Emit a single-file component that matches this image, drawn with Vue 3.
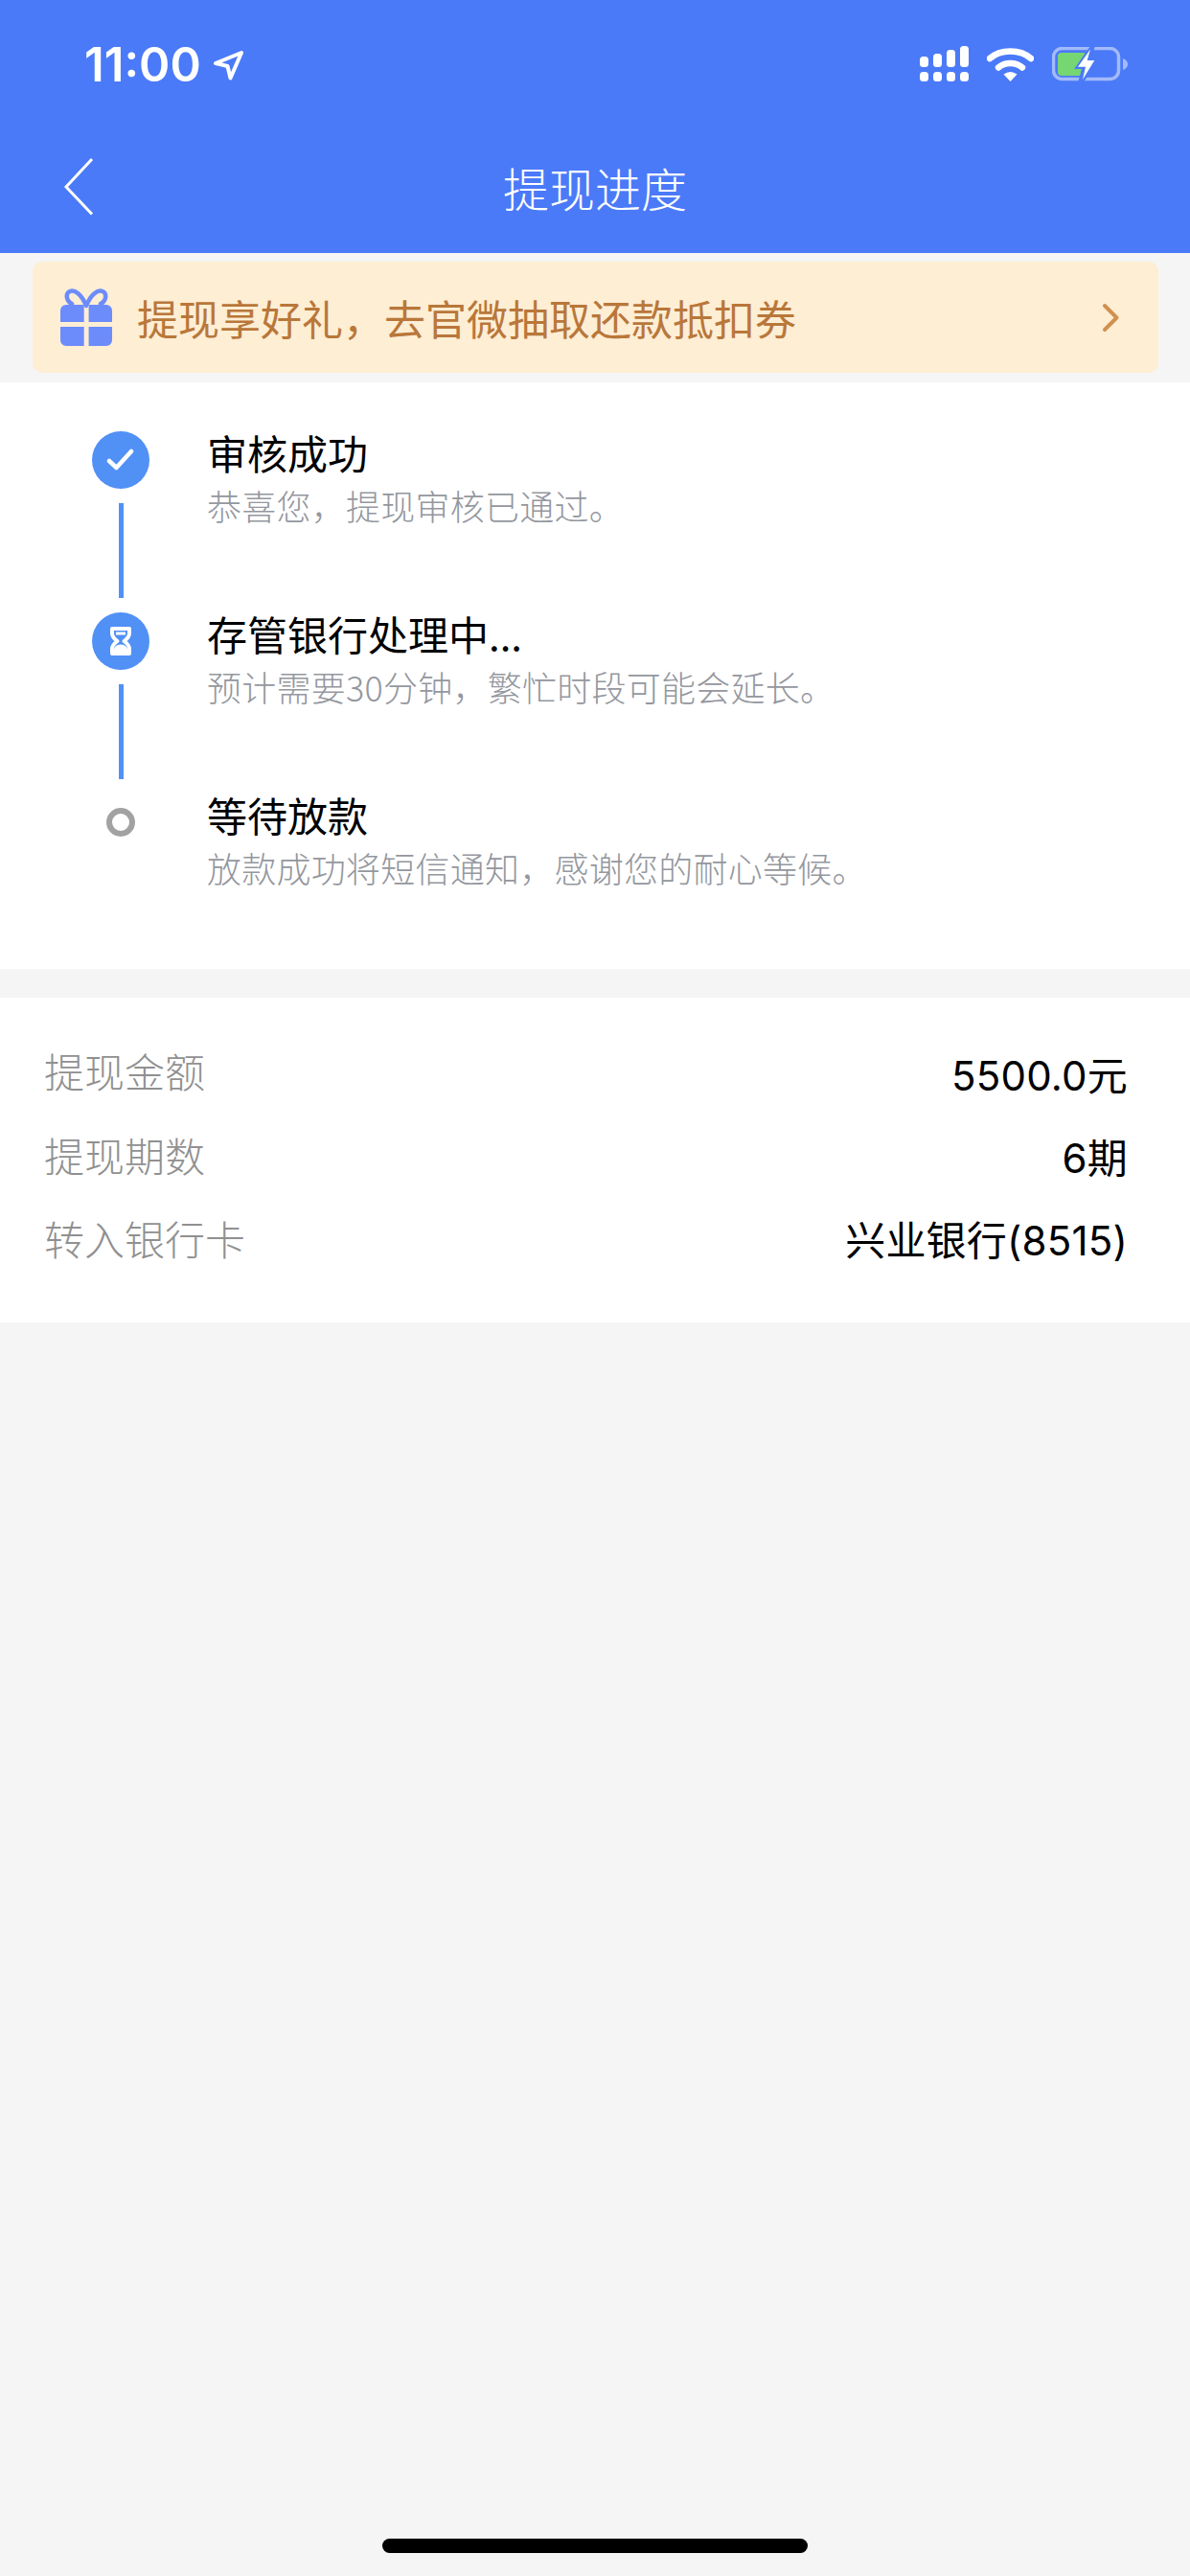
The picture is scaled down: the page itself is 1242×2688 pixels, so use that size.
<script setup>
const steps = [
  { title: '审核成功', desc: '恭喜您\uFF0C提现审核已通过。', kind: 'done' },
  { title: '存管银行处理中...', desc: '预计需要30分钟\uFF0C繁忙时段可能会延长。', kind: 'wait' },
  { title: '等待放款', desc: '放款成功将短信通知\uFF0C感谢您的耐心等候。', kind: 'todo' }
]
const labels = ['提现金额', '提现期数', '转入银行卡']
const values = ['5500.0元', '6期', '兴业银行(8515)']
</script>

<template>
  <div class="page">
    <header class="head">
      <div class="status">
        <div class="time">
          <span>11:00</span>
          <svg class="loc" width="33" height="32" viewBox="0 0 33 32"><path d="M3 14 L30 3 L18.5 29.5 L15.5 17 Z" fill="none" stroke="#fff" stroke-width="4" stroke-linejoin="round"/></svg>
        </div>
        <div class="sys">
          <svg class="signal" width="51" height="37" viewBox="0 0 51 37" fill="#fff">
            <rect x="0" y="11" width="9" height="11" rx="3.5"/><rect x="14" y="8" width="9" height="14" rx="3.5"/><rect x="28" y="4" width="9" height="18" rx="3.5"/><rect x="42" y="0" width="9" height="22" rx="3.5"/>
            <rect x="0" y="27" width="9" height="10" rx="3.5"/><rect x="14" y="27" width="9" height="10" rx="3.5"/><rect x="28" y="27" width="9" height="10" rx="3.5"/><rect x="42" y="27" width="9" height="10" rx="3.5"/>
          </svg>
          <svg class="wifi" width="49" height="35" viewBox="0 0 49 35">
            <path d="M3 11 C14 1 35 1 46 11" fill="none" stroke="#fff" stroke-width="6.5" stroke-linecap="round"/>
            <path d="M12 20.5 C19 14.5 30 14.5 37 20.5" fill="none" stroke="#fff" stroke-width="6.5" stroke-linecap="round"/>
            <path d="M17.5 27.5 Q24.5 22.5 31.5 27.5 L24.5 35 Z" fill="#fff"/>
          </svg>
          <svg class="batt" width="79" height="37" viewBox="0 0 79 37">
            <rect x="1.5" y="1.5" width="68" height="32" rx="9" fill="none" stroke="#a3bafb" stroke-width="3.5"/>
            <path d="M74 12 Q79 14 79 18 Q79 22 74 24 Z" fill="#a3bafb"/>
            <rect x="6" y="6" width="30" height="24" rx="4" fill="#76d672"/>
            <path d="M40 -1 L23 23 H31 L27 37 H33 L49 12 H41 L45 -1 Z" fill="#4a7af8"/>
            <path d="M40 2.5 L27 20.7 H35 L32 34 L44.3 14 H36.7 Z" fill="#fff"/>
          </svg>
        </div>
      </div>
      <div class="nav">
        <svg class="back" width="34" height="62" viewBox="0 0 34 62"><path d="M30 2 L3 31 L30 59.5" fill="none" stroke="#fff" stroke-width="3"/></svg>
        <span class="nav-title">提现进度</span>
      </div>
    </header>

    <div class="notice-wrap">
      <div class="notice">
        <svg class="gift" width="54" height="60" viewBox="0 0 54 60">
          <path d="M27 18 C22 6 15 1 10 3 C5 5 6 13 12 16 M27 18 C32 6 39 1 44 3 C49 5 48 13 42 16" fill="none" stroke="#6d8cfb" stroke-width="4.5" stroke-linecap="round"/>
          <path d="M6 17 H24.7 V35 H0 V23 a6 6 0 0 1 6-6 Z M29.6 17 H48 a6 6 0 0 1 6 6 V35 H29.6 Z M0 40 H24.7 V60 H6 a6 6 0 0 1-6-6 Z M29.6 40 H54 V54 a6 6 0 0 1-6 6 H29.6 Z" fill="#6d8cfb"/>
        </svg>
        <span class="notice-text">提现享好礼&#xFF0C;去官微抽取还款抵扣券</span>
        <svg class="chev" width="19" height="31" viewBox="0 0 19 31"><path d="M3 3 L15.5 15.5 L3 28" fill="none" stroke="#d0914f" stroke-width="4" stroke-linecap="round" stroke-linejoin="round"/></svg>
      </div>
    </div>

    <section class="steps">
      <div v-for="(s, i) in steps" :key="s.title" class="step">
        <div class="rail">
          <div class="dot" :class="s.kind">
            <svg v-if="s.kind === 'done'" width="30" height="24" viewBox="0 0 30 24"><path d="M3 13 L10.5 20 L26 3" fill="none" stroke="#fff" stroke-width="4.5" stroke-linecap="round" stroke-linejoin="round"/></svg>
            <svg v-else-if="s.kind === 'wait'" width="24" height="30" viewBox="0 0 24 30">
              <path d="M3 2 H21 V7 Q21 11 15.5 15 Q21 19 21 23 V28 H3 V23 Q3 19 8.5 15 Q3 11 3 7 Z" fill="none" stroke="#fff" stroke-width="4" stroke-linejoin="round"/>
              <path d="M7 7 H17" stroke="#fff" stroke-width="3"/>
              <path d="M5 27 V24 Q5 19 12 18.5 Q19 19 19 24 V27 Z" fill="#fff"/>
            </svg>
          </div>
          <div v-if="i < steps.length - 1" class="line"></div>
        </div>
        <div class="copy">
          <div class="title">{{ s.title }}</div>
          <div class="desc">{{ s.desc }}</div>
        </div>
      </div>
    </section>

    <section class="info">
      <div class="col labels">
        <div v-for="l in labels" :key="l" class="label">{{ l }}</div>
      </div>
      <div class="col values">
        <div v-for="v in values" :key="v" class="value">{{ v }}</div>
      </div>
    </section>

    <div class="home"></div>
  </div>
</template>

<style>
html, body { margin: 0; background: #f5f5f5; }
</style>

<style scoped>
.page {
  width: 1242px;
  height: 2688px;
  background: #f5f5f5;
  position: relative;
  overflow: hidden;
  font-family: "Noto Sans CJK SC", "Liberation Sans", sans-serif;
}
.head { height: 264px; background: #4a7af8; color: #fff; }
.status {
  height: 130px;
  display: flex;
  justify-content: space-between;
  padding: 48px 65px 0 88px;
  box-sizing: border-box;
}
.time {
  display: flex;
  align-items: flex-start;
  gap: 12px;
  font: 600 49px/40px "Inter", "Noto Sans", sans-serif;
  height: 40px;
}
.loc { margin-top: 4px; }
.sys { display: flex; gap: 19px; align-items: flex-start; }
.wifi { margin-top: 2px; }
.batt { margin-top: 1px; }
.nav { height: 134px; position: relative; display: flex; align-items: center; justify-content: center; }
.nav-title { font-size: 48px; font-weight: 300; line-height: 64px; margin-top: -5px; }
.back { position: absolute; left: 66px; top: 34px; }
.notice-wrap { height: 135px; padding: 9px 33px 0 34px; box-sizing: border-box; }
.notice {
  height: 116px;
  background: #fdeed4;
  border-radius: 10px;
  display: flex;
  align-items: center;
  padding: 0 40px 0 29px;
}
.gift { flex: none; }
.notice-text { flex: 1; margin-left: 26px; font-size: 43px; color: #b9773a; line-height: 56px; white-space: nowrap; }
.steps { background: #fff; height: 612px; padding-top: 51px; box-sizing: border-box; }
.step { display: flex; height: 189px; }
.rail { width: 60px; margin-left: 96px; display: flex; flex-direction: column; align-items: center; flex: none; }
.dot { width: 60px; height: 60px; border-radius: 50%; background: #5191f6; display: flex; align-items: center; justify-content: center; flex: none; }
.dot.todo { width: 30px; height: 30px; background: #fff; border: 6px solid #a2a2a2; box-sizing: border-box; margin-top: 15px; }
.line { width: 5px; height: 99px; background: #5191f6; margin-top: 15px; flex: none; }
.copy { margin-left: 60px; margin-top: -6px; }
.title { font-size: 42px; line-height: 56px; color: #000; white-space: nowrap; }
.desc { font-size: 36px; line-height: 54px; font-weight: 300; color: #94979e; letter-spacing: 0.25px; white-space: nowrap; }
.info {
  margin-top: 30px;
  height: 339px;
  background: #fff;
  padding: 0 65px 0 46px;
  box-sizing: border-box;
  display: flex;
  justify-content: space-between;
  font-size: 42px;
  line-height: 56px;
}
.labels { padding-top: 48px; }
.label { height: 87.5px; color: #909090; font-weight: 300; }
.values { padding-top: 54px; text-align: right; }
.value { height: 86px; color: #000; font-family: "Inter", "Noto Sans CJK SC", sans-serif; font-weight: 400; letter-spacing: 0.2px; }
.home { position: absolute; left: 399px; top: 2649px; width: 444px; height: 15px; border-radius: 7.5px; background: #000; }
</style>
